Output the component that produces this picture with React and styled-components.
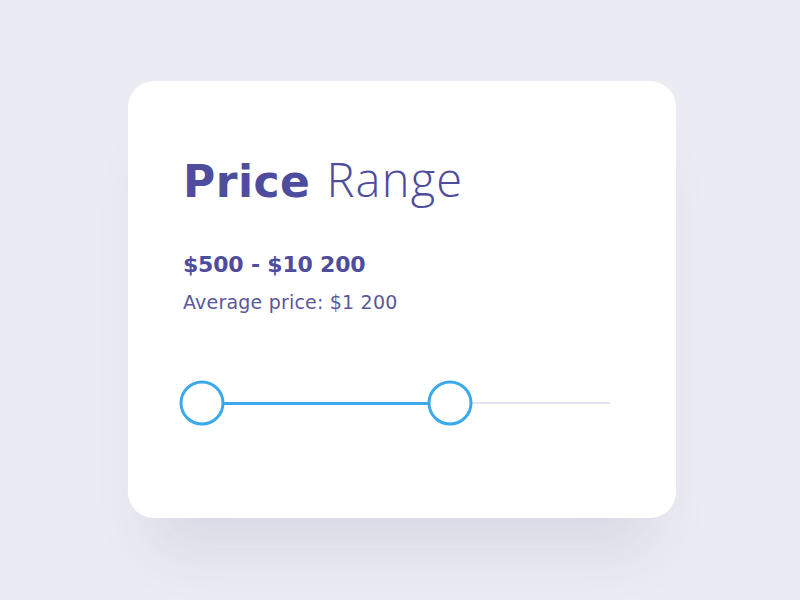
import React from 'react';
import styled, { createGlobalStyle } from 'styled-components';

const GlobalStyle = createGlobalStyle`
  html, body {
    margin: 0;
    padding: 0;
    background: #ebebf3;
    font-family: "DejaVu Sans", "Open Sans", sans-serif;
  }
`;

const range = { min: 500, max: 10200, low: 500, high: 6450, limit: 10300 };

function App() {
  const lowPct = ((range.low - range.min) / (range.limit - range.min)) * 100;
  const highPct = ((range.high - range.min) / (range.limit - range.min)) * 100;

  return (
    <Page>
      <GlobalStyle />
      <Card>
        <Title>
          <strong>Price</strong> <span>Range</span>
        </Title>
        <Amount>$500 - $10 200</Amount>
        <Average>Average price: $1 200</Average>
        <Slider>
          <Track>
            <Fill style={{ left: `${lowPct}%`, width: `${highPct - lowPct}%` }} />
            <Thumb style={{ left: `${lowPct}%` }} />
            <Thumb style={{ left: `${highPct}%` }} />
          </Track>
        </Slider>
      </Card>
    </Page>
  );
}

export default App;

const Page = styled.div`
  width: 800px;
  height: 600px;
  display: flex;
  justify-content: center;
  padding: 81px 0 0 4px;
  box-sizing: border-box;
`;

const Card = styled.div`
  width: 548px;
  height: 437px;
  box-sizing: border-box;
  background: #ffffff;
  border-radius: 26px;
  padding: 56px 66px 0 55px;
  display: flex;
  flex-direction: column;
  box-shadow: 0 55px 60px -25px rgba(60, 60, 110, 0.1);
`;

const Title = styled.h1`
  margin: 0;
  height: 84px;
  font-size: 44px;
  line-height: 84px;
  font-weight: 300;
  color: #4e4c9c;
  word-spacing: 2px;

  strong {
    font-weight: 700;
    letter-spacing: 0.5px;
  }

  span {
    font-family: "Open Sans", sans-serif;
    font-size: 47px;
    letter-spacing: 1.2px;
  }
`;

const Amount = styled.div`
  margin-top: 31px;
  font-size: 22px;
  font-weight: 700;
  color: #4e4c9c;
  letter-spacing: -0.2px;
`;

const Average = styled.div`
  margin-top: 14px;
  font-size: 19px;
  font-weight: 400;
  color: #5a5898;
  letter-spacing: 0.2px;
`;

const Slider = styled.div`
  margin-top: 89px;
  padding-left: 19px;
`;

const Track = styled.div`
  position: relative;
  height: 2px;
  background: #e3e3ef;
`;

const Fill = styled.div`
  position: absolute;
  top: -0.5px;
  height: 3px;
  background: #3aa9ec;
`;

const Thumb = styled.div`
  position: absolute;
  top: 1px;
  width: 45px;
  height: 45px;
  box-sizing: border-box;
  border: 3px solid #3aa9ec;
  border-radius: 50%;
  background: #ffffff;
  transform: translate(-50%, -50%);
`;
